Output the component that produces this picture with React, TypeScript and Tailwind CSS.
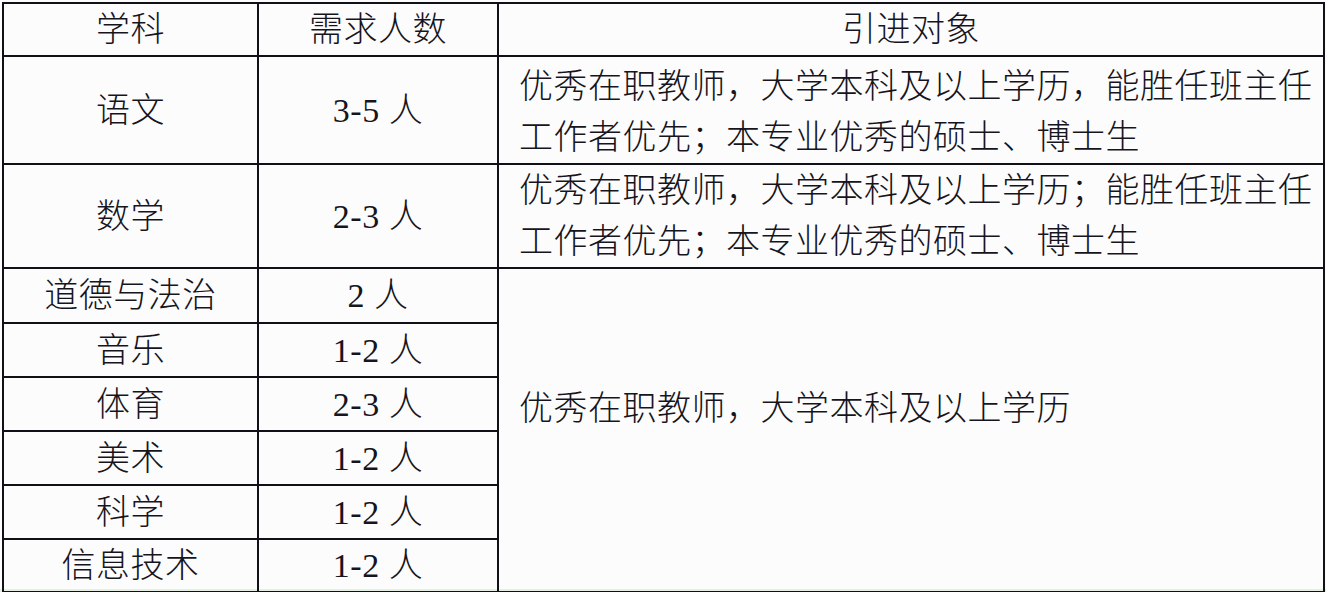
const cjk = "font-['Liberation_Serif','Noto_Sans_CJK_SC',serif]";

const smallRows = [
  { subject: "道德与法治", count: "2 人", h: "h-[55px]" },
  { subject: "音乐", count: "1-2 人", h: "h-[54px]" },
  { subject: "体育", count: "2-3 人", h: "h-[54px]" },
  { subject: "美术", count: "1-2 人", h: "h-[54px]" },
  { subject: "科学", count: "1-2 人", h: "h-[54px]" },
  { subject: "信息技术", count: "1-2 人", h: "h-[51px]" },
];

const cell = "border-2 border-[#101018] p-0 text-center align-middle";

export default function App() {
  return (
    <div className="h-[592px] w-[1326px] bg-[#e6efe4]">
      <div className={`h-[589px] bg-[#fcfcfd] pt-[2px] pl-[2px] text-[34px] font-light leading-[51px] tracking-[0.5px] text-[#16141c] ${cjk}`}>
        <table className="w-[1321px] table-fixed border-collapse">
          <colgroup>
            <col className="w-[255px]" />
            <col className="w-[240px]" />
            <col className="w-[826px]" />
          </colgroup>
          <tbody>
            <tr className="h-[53px]">
              <td className={cell}>学科</td>
              <td className={cell}>需求人数</td>
              <td className={cell}>引进对象</td>
            </tr>
            <tr className="h-[107px]">
              <td className={cell}>语文</td>
              <td className={cell}>3-5 人</td>
              <td className={`${cell} pl-[20px] pt-[4px] text-left`}>
                优秀在职教师，大学本科及以上学历，能胜任班主任
                <br />
                工作者优先；本专业优秀的硕士、博士生
              </td>
            </tr>
            <tr className="h-[103px]">
              <td className={cell}>数学</td>
              <td className={cell}>2-3 人</td>
              <td className={`${cell} pl-[20px] text-left`}>
                优秀在职教师，大学本科及以上学历；能胜任班主任
                <br />
                工作者优先；本专业优秀的硕士、博士生
              </td>
            </tr>
            {smallRows.map((r, i) => (
              <tr key={r.subject} className={r.h}>
                <td className={cell}>{r.subject}</td>
                <td className={cell}>{r.count}</td>
                {i === 0 && (
                  <td rowSpan={6} className={`${cell} pb-[44px] pl-[20px] text-left`}>
                    优秀在职教师，大学本科及以上学历
                  </td>
                )}
              </tr>
            ))}
          </tbody>
        </table>
      </div>
    </div>
  );
}
